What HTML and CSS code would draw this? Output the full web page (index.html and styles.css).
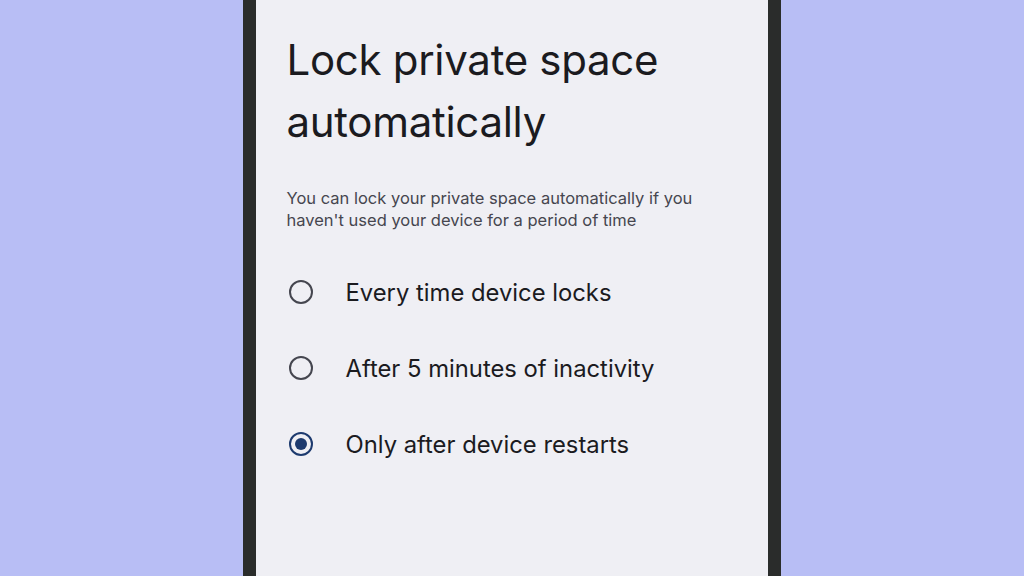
FILE: index.html
```html
<!DOCTYPE html>
<html lang="en">
<head>
  <meta charset="UTF-8">
  <meta name="viewport" content="width=device-width, initial-scale=1.0">
  <title>Lock private space automatically</title>
  <link rel="stylesheet" href="styles.css">
</head>
<body>

  <!-- Phone frame -->
  <div class="phone">
    <div class="screen">
      <h1 class="title">Lock private space automatically</h1>
      <p class="summary">You can lock your private space automatically if you haven't used your device for a period of time</p>

      <div class="options">
        <label class="option">
          <span class="radio"></span>
          <span class="option-label">Every time device locks</span>
        </label>
        <label class="option">
          <span class="radio"></span>
          <span class="option-label">After 5 minutes of inactivity</span>
        </label>
        <label class="option">
          <span class="radio checked"></span>
          <span class="option-label">Only after device restarts</span>
        </label>
      </div>
    </div>
  </div>

</body>
</html>
```

FILE: styles.css
```css
/* Overall Styling */
body {
  font-family: 'Inter', 'Noto Sans', sans-serif;
  background-color: #b8bef5;
  margin: 0;
  padding: 0;
  height: 576px;
  overflow: hidden;
  display: flex;
  justify-content: center;
}

/* Phone frame */
.phone {
  width: 512px;
  height: 576px;
  margin-left: -1px;
  background-color: #2a2c2b;
  padding: 0 13px;
}

.screen {
  height: 100%;
  background-color: #efeff4;
  padding: 29px 20px 0 31px;
  box-sizing: border-box;
}

.title {
  margin: 0;
  font-size: 42px;
  font-weight: 400;
  line-height: 62px;
  letter-spacing: -0.3px;
  color: #1b1b1f;
  width: 400px;
}

.summary {
  margin: 34px 0 0;
  font-size: 16.5px;
  line-height: 22px;
  color: #46464f;
  width: 430px;
}

/* Radio list */
.options {
  margin-top: 23px;
  display: flex;
  flex-direction: column;
}

.option {
  height: 76px;
  display: flex;
  align-items: center;
  gap: 33px;
}

.radio {
  width: 20px;
  height: 20px;
  margin-left: 2px;
  border: 2px solid #45464f;
  border-radius: 50%;
  display: flex;
  align-items: center;
  justify-content: center;
}

.radio.checked {
  border-color: #1d3a6e;
}

.radio.checked::after {
  content: "";
  width: 12px;
  height: 12px;
  border-radius: 50%;
  background-color: #1d3a6e;
}

.option-label {
  font-size: 23.8px;
  color: #1b1b1f;
}
```
